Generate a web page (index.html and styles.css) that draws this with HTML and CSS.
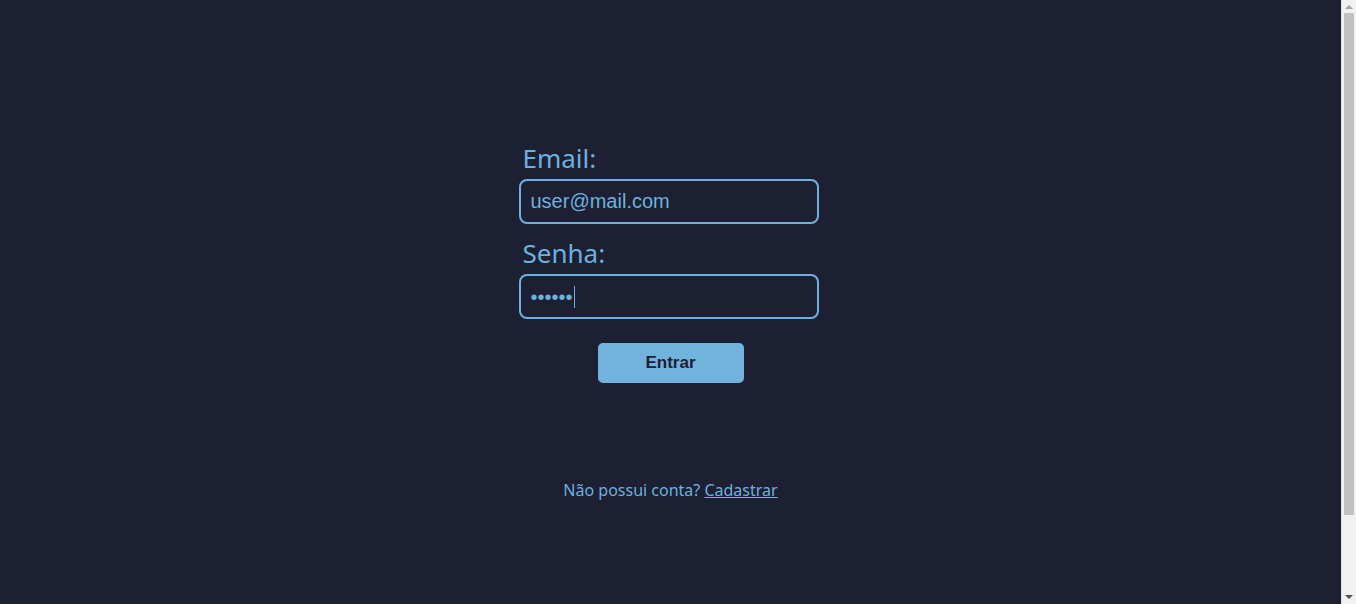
FILE: index.html
```html
<!DOCTYPE html>
<html lang="pt-BR">
<head>
<meta charset="utf-8">
<title>Login</title>
<link rel="stylesheet" href="styles.css">
</head>
<body>
<main class="page">
  <form class="login-form">
    <label class="field-label" for="email">Email:</label>
    <input class="field-input" id="email" type="email" value="user@mail.com">
    <label class="field-label" for="senha">Senha:</label>
    <div class="field-input password" id="senha"><span class="dots">••••••</span><span class="caret"></span></div>
    <div class="actions">
      <button type="button" class="btn-enter">Entrar</button>
    </div>
  </form>
  <p class="signup">Não possui conta? <a href="#" class="signup-link">Cadastrar</a></p>
</main>
<div class="scrollbar" aria-hidden="true">
  <span class="arrow arrow-up"></span>
  <span class="thumb"></span>
  <span class="arrow arrow-down"></span>
</div>
</body>
</html>
```

FILE: styles.css
```css
html, body {
  margin: 0;
  padding: 0;
  background: #1d1f33;
  overflow: hidden;
}
body {
  font-family: "Noto Sans", "Open Sans", sans-serif;
  color: #6cb2de;
}
.page {
  min-height: 604px;
  margin-right: 15px;
  display: flex;
  flex-direction: column;
  align-items: center;
  padding-top: 129px;
  box-sizing: border-box;
}
.login-form {
  width: 300px;
  margin-right: 4px;
  display: flex;
  flex-direction: column;
}
.field-label {
  display: block;
  font-size: 26px;
  line-height: 30px;
  padding: 14px 0 6px 4px;
  color: #6cb2de;
}
.field-input {
  box-sizing: border-box;
  width: 300px;
  height: 45px;
  border: 2px solid #6cb2de;
  border-radius: 8px;
  background: #1d1f33;
  color: #6cb2de;
  font-family: "Liberation Sans", Arial, sans-serif;
  font-size: 20px;
  padding: 0 10px;
  outline: none;
}
.password {
  display: flex;
  align-items: center;
}
.dots {
  font-family: "Liberation Sans", Arial, sans-serif;
  font-size: 20px;
  line-height: 22px;
}
.caret {
  display: inline-block;
  width: 1px;
  height: 22px;
  background: #6cb2de;
  margin-left: 1px;
}
.actions {
  display: flex;
  justify-content: center;
  padding-top: 24px;
  margin-right: -4px;
}
.btn-enter {
  width: 146px;
  height: 40px;
  border: none;
  border-radius: 5px;
  background: #72b3dd;
  color: #1d1f33;
  font-family: "Liberation Sans", Arial, sans-serif;
  font-weight: bold;
  font-size: 17px;
  cursor: pointer;
}
.signup {
  margin: 96px 0 0;
  font-size: 16px;
  line-height: 22px;
  color: #6cb2de;
}
.signup-link {
  color: #6cb2de;
  text-decoration: underline;
}
.scrollbar {
  position: fixed;
  top: 0;
  right: 0;
  width: 15px;
  height: 604px;
  background: #f1f1f1;
  border-left: 1px solid #e6e6e6;
  box-sizing: border-box;
}
.thumb {
  position: absolute;
  left: 2px;
  top: 13px;
  width: 10px;
  height: 502px;
  background: #c1c1c1;
}
.arrow {
  position: absolute;
  left: 3px;
  width: 0;
  height: 0;
  border-left: 4px solid transparent;
  border-right: 4px solid transparent;
}
.arrow-up {
  top: 5px;
  border-bottom: 4px solid #a3a3a3;
}
.arrow-down {
  bottom: 5px;
  border-top: 4px solid #505050;
}
```
